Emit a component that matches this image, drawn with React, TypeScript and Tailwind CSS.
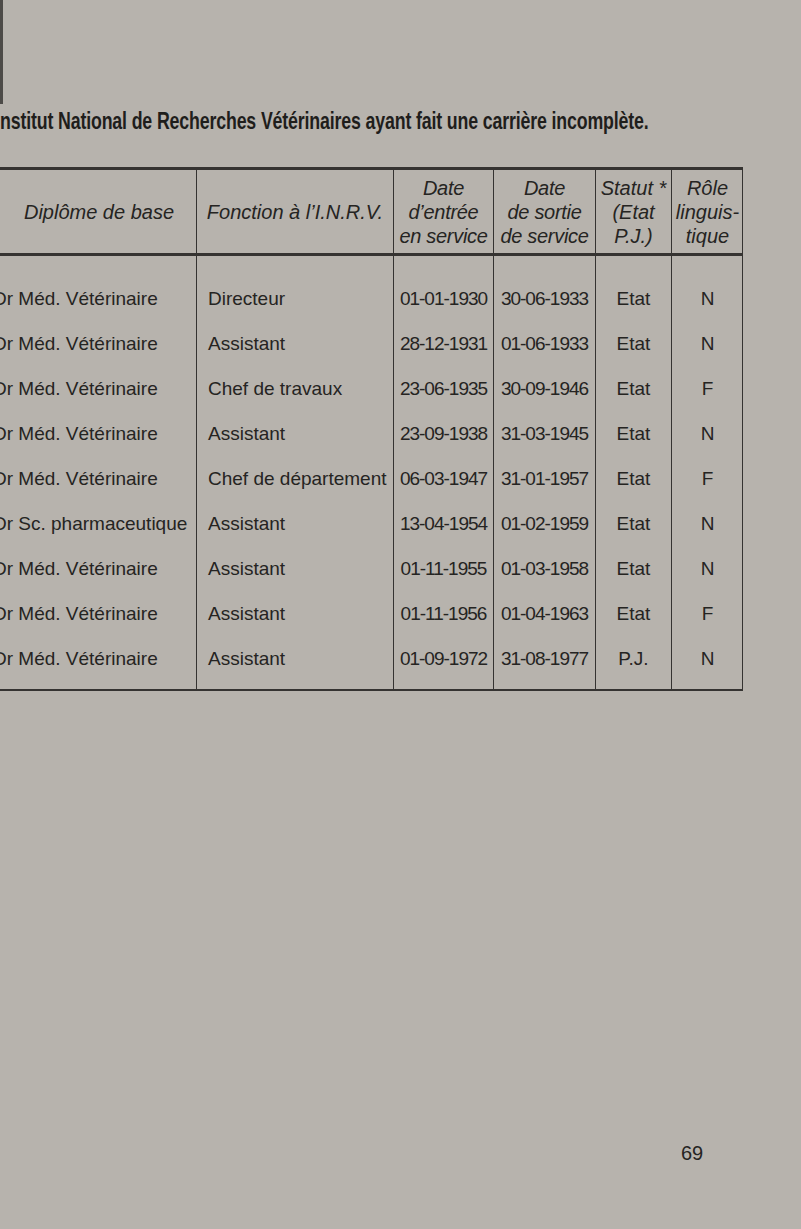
import React from 'react';

const rows = [
  { diplome: 'Dr Méd. Vétérinaire', fonction: 'Directeur', entree: '01-01-1930', sortie: '30-06-1933', statut: 'Etat', role: 'N' },
  { diplome: 'Dr Méd. Vétérinaire', fonction: 'Assistant', entree: '28-12-1931', sortie: '01-06-1933', statut: 'Etat', role: 'N' },
  { diplome: 'Dr Méd. Vétérinaire', fonction: 'Chef de travaux', entree: '23-06-1935', sortie: '30-09-1946', statut: 'Etat', role: 'F' },
  { diplome: 'Dr Méd. Vétérinaire', fonction: 'Assistant', entree: '23-09-1938', sortie: '31-03-1945', statut: 'Etat', role: 'N' },
  { diplome: 'Dr Méd. Vétérinaire', fonction: 'Chef de département', entree: '06-03-1947', sortie: '31-01-1957', statut: 'Etat', role: 'F' },
  { diplome: 'Dr Sc. pharmaceutique', fonction: 'Assistant', entree: '13-04-1954', sortie: '01-02-1959', statut: 'Etat', role: 'N' },
  { diplome: 'Dr Méd. Vétérinaire', fonction: 'Assistant', entree: '01-11-1955', sortie: '01-03-1958', statut: 'Etat', role: 'N' },
  { diplome: 'Dr Méd. Vétérinaire', fonction: 'Assistant', entree: '01-11-1956', sortie: '01-04-1963', statut: 'Etat', role: 'F' },
  { diplome: 'Dr Méd. Vétérinaire', fonction: 'Assistant', entree: '01-09-1972', sortie: '31-08-1977', statut: 'P.J.', role: 'N' },
];

const cols = 'grid grid-cols-[196px_197px_100px_102px_76px_72px]';

export default function App() {
  return (
    <div className="relative w-[801px] h-[1229px] overflow-hidden bg-[#b7b3ad] text-[#252422] font-['Liberation_Sans',Arial,sans-serif]">
      {/* binding shadow on the left edge */}
      <div className="absolute left-0 top-0 h-[104px] w-[3px] bg-[#4d4b48]" />

      <div className="pt-[106px]">
        <h1 className="origin-left scale-x-[0.74] whitespace-nowrap text-[24px] font-bold leading-[30px] tracking-[-0.2px] text-[#1f1e1c]">
          nstitut National de Recherches Vétérinaires ayant fait une carrière incomplète.
        </h1>
      </div>

      <div className="mt-[31px] w-[743px] border-t-[3px] border-b-[2px] border-r border-[#353331]">
        {/* header */}
        <div className={`${cols} h-[86px] border-b-[3px] border-[#353331] text-[20px] italic leading-[24px]`}>
          <div className="flex items-center justify-center pl-[2px]">Diplôme de base</div>
          <div className="flex items-center justify-center border-l border-[#353331]">Fonction à l’I.N.R.V.</div>
          <div className="flex flex-col items-center justify-center border-l border-[#353331] tracking-[-0.3px]">
            <span>Date</span>
            <span>d’entrée</span>
            <span>en service</span>
          </div>
          <div className="flex flex-col items-center justify-center border-l border-[#353331] tracking-[-0.3px]">
            <span>Date</span>
            <span>de sortie</span>
            <span>de service</span>
          </div>
          <div className="flex flex-col items-center justify-center border-l border-[#353331]">
            <span>Statut *</span>
            <span>(Etat</span>
            <span>P.J.)</span>
          </div>
          <div className="flex flex-col items-center justify-center border-l border-[#353331]">
            <span>Rôle</span>
            <span>linguis-</span>
            <span>tique</span>
          </div>
        </div>

        {/* body */}
        <div className={`${cols} text-[19px] leading-[45px]`}>
          <div className="-ml-[7px] pt-[20px] pb-[8px]">
            {rows.map((r, i) => (
              <div key={i} className="whitespace-nowrap">{r.diplome}</div>
            ))}
          </div>
          <div className="border-l border-[#353331] pl-[11px] pt-[20px] pb-[8px]">
            {rows.map((r, i) => (
              <div key={i} className="whitespace-nowrap">{r.fonction}</div>
            ))}
          </div>
          <div className="border-l border-[#353331] pt-[20px] pb-[8px] text-center tracking-[-1px]">
            {rows.map((r, i) => (
              <div key={i}>{r.entree}</div>
            ))}
          </div>
          <div className="border-l border-[#353331] pt-[20px] pb-[8px] text-center tracking-[-1px]">
            {rows.map((r, i) => (
              <div key={i}>{r.sortie}</div>
            ))}
          </div>
          <div className="border-l border-[#353331] pt-[20px] pb-[8px] text-center">
            {rows.map((r, i) => (
              <div key={i}>{r.statut}</div>
            ))}
          </div>
          <div className="border-l border-[#353331] pt-[20px] pb-[8px] text-center">
            {rows.map((r, i) => (
              <div key={i}>{r.role}</div>
            ))}
          </div>
        </div>
      </div>

      <div className="mt-[450px] pl-[681px] text-[20px] leading-[24px] text-[#252422]">69</div>
    </div>
  );
}
